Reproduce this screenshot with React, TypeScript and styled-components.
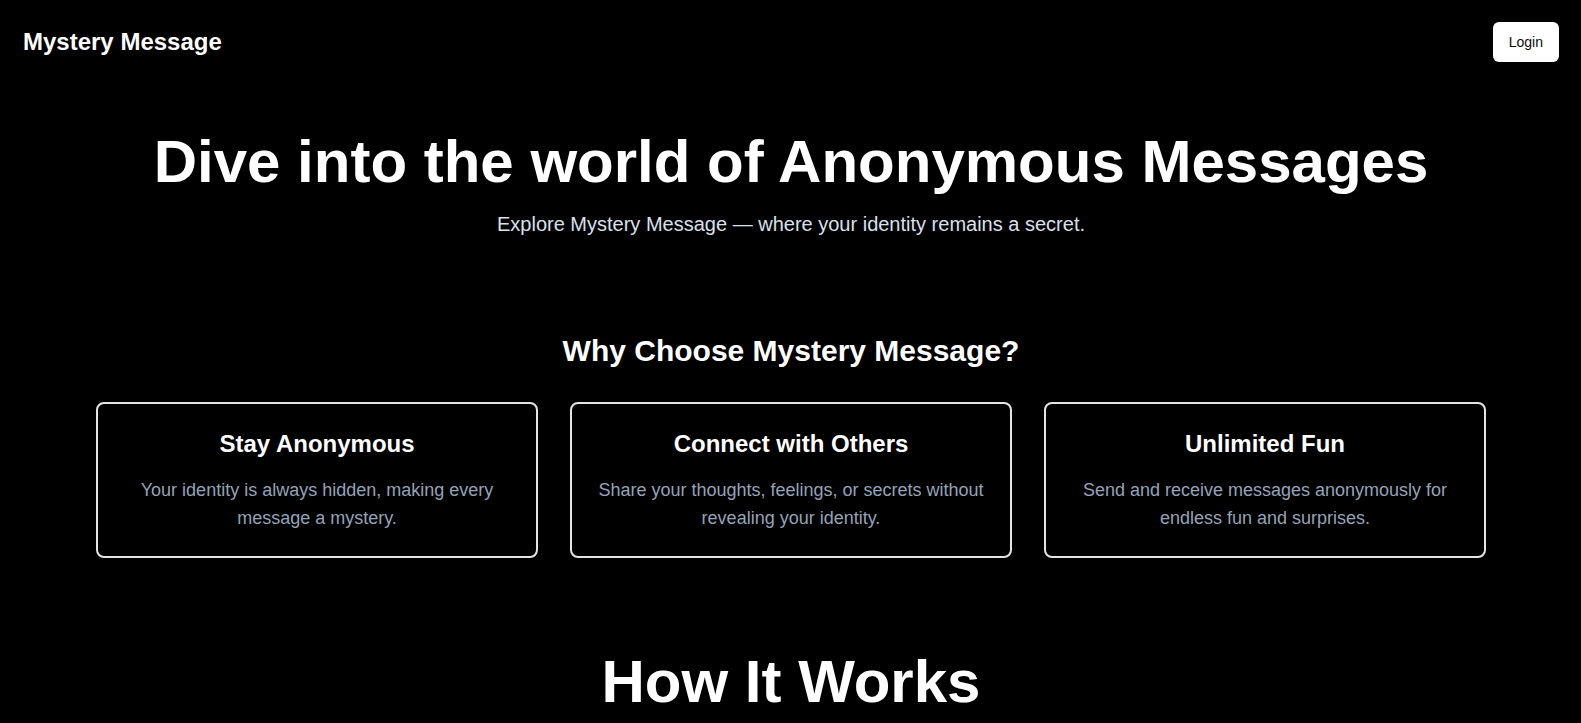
import React from 'react';
import styled, { createGlobalStyle } from 'styled-components';

interface Feature {
  title: string;
  text: string;
}

const features: Feature[] = [
  {
    title: 'Stay Anonymous',
    text: 'Your identity is always hidden, making every message a mystery.',
  },
  {
    title: 'Connect with Others',
    text: 'Share your thoughts, feelings, or secrets without revealing your identity.',
  },
  {
    title: 'Unlimited Fun',
    text: 'Send and receive messages anonymously for endless fun and surprises.',
  },
];

const App: React.FC = () => (
  <>
    <GlobalStyle />
    <Page>
      <Nav>
        <Logo>Mystery Message</Logo>
        <LoginButton type='button'>Login</LoginButton>
      </Nav>

      <Main>
        <Hero>
          <HeroTitle>Dive into the world of Anonymous Messages</HeroTitle>
          <HeroText>Explore Mystery Message — where your identity remains a secret.</HeroText>
        </Hero>

        <Features>
          <SectionTitle>Why Choose Mystery Message?</SectionTitle>
          <CardGrid>
            {features.map((f) => (
              <Card key={f.title}>
                <CardTitle>{f.title}</CardTitle>
                <CardText>{f.text}</CardText>
              </Card>
            ))}
          </CardGrid>
        </Features>

        <HowTitle>How It Works</HowTitle>
      </Main>
    </Page>
  </>
);

export default App;

const GlobalStyle = createGlobalStyle`
  * {
    box-sizing: border-box;
  }

  html,
  body {
    margin: 0;
    padding: 0;
    background: #000;
  }

  body {
    font-family: 'Liberation Sans', Arial, sans-serif;
    color: #fff;
    overflow: hidden;
  }
`;

const Page = styled.div`
  min-height: 100vh;
  background: #000;
`;

const Nav = styled.nav`
  display: flex;
  align-items: center;
  justify-content: space-between;
  height: 84px;
  padding: 0 22px 0 23px;
`;

const Logo = styled.a`
  font-size: 24px;
  line-height: 32px;
  font-weight: 700;
  color: #fff;
  text-decoration: none;
`;

const LoginButton = styled.button`
  height: 40px;
  padding: 0 16px;
  border: none;
  border-radius: 6px;
  background: #fff;
  color: #0a0a0a;
  font-family: inherit;
  font-size: 14px;
  cursor: pointer;
`;

const Main = styled.main`
  display: flex;
  flex-direction: column;
  align-items: center;
  padding: 0 95px 0 96px;
`;

const Hero = styled.section`
  display: flex;
  flex-direction: column;
  align-items: center;
  padding-top: 48px;
  text-align: center;
`;

const HeroTitle = styled.h1`
  margin: 0;
  font-size: 60px;
  line-height: 60px;
  font-weight: 700;
`;

const HeroText = styled.p`
  margin: 18px 0 0;
  font-size: 20px;
  line-height: 28px;
  color: #d9e0ea;
`;

const Features = styled.section`
  display: flex;
  flex-direction: column;
  align-items: center;
  width: 100%;
  margin-top: 95px;
`;

const SectionTitle = styled.h2`
  margin: 0 0 33px;
  font-size: 30px;
  line-height: 36px;
  font-weight: 700;
`;

const CardGrid = styled.div`
  display: grid;
  grid-template-columns: repeat(3, 1fr);
  gap: 32px;
  width: 100%;
`;

const Card = styled.article`
  padding: 24px;
  border: 2px solid #e4e4e7;
  border-radius: 8px;
  text-align: center;
`;

const CardTitle = styled.h3`
  margin: 0 0 16px;
  font-size: 24px;
  line-height: 32px;
  font-weight: 700;
`;

const CardText = styled.p`
  margin: 0;
  font-size: 18px;
  line-height: 28px;
  color: #94a3b8;
`;

const HowTitle = styled.h2`
  margin: 94px 0 0;
  font-size: 60px;
  line-height: 60px;
  font-weight: 700;
`;
